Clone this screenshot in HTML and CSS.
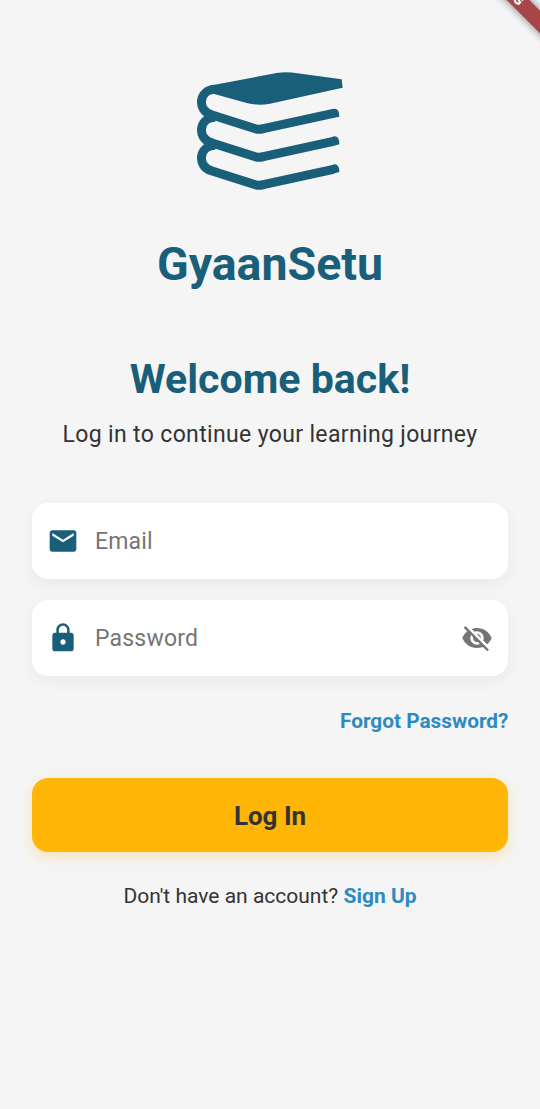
FILE: index.html
```html
<!DOCTYPE html>
<html lang="en">
<head>
<meta charset="utf-8">
<title>GyaanSetu</title>
<link rel="stylesheet" href="styles.css">
</head>
<body>
<main class="screen">
  <svg class="logo" width="180" height="140" viewBox="0 0 540 420" aria-hidden="true">
    <path class="logo-fill" d="M100 75 L290 39 Q320 34 352 40 L485 58 L488 83 L270 131 Q235 138 200 129 L100 101 Z"/>
    <g class="logo-line">
      <path d="M106 88 C56 88 50 152 94 164 L226 206 Q237 210 250 206 L460 160"/>
      <path d="M106 172 C56 172 50 236 94 248 L226 290 Q237 294 250 290 L460 244"/>
      <path d="M106 256 C56 256 50 320 94 332 L226 374 Q237 378 250 374 L460 328"/>
    </g>
    <g class="logo-fill">
      <path d="M456 147 L463 146 Q478 145 478 170 L456 175 Z"/>
      <path d="M456 231 L463 229 Q478 228 478 253 L456 259 Z"/>
      <path d="M456 315 L463 313 Q478 312 478 336 L456 342 Z"/>
    </g>
  </svg>
  <h1 class="brand">GyaanSetu</h1>
  <h2 class="welcome">Welcome back!</h2>
  <p class="subtitle">Log in to continue your learning journey</p>
  <form class="form">
    <div class="field">
      <svg class="icon" viewBox="0 0 24 24"><path d="M20 4H4c-1.1 0-1.99.9-1.99 2L2 18c0 1.1.9 2 2 2h16c1.1 0 2-.9 2-2V6c0-1.1-.9-2-2-2zm0 4l-8 5-8-5V6l8 5 8-5v2z"/></svg>
      <span class="label">Email</span>
    </div>
    <div class="field">
      <svg class="icon" viewBox="0 0 24 24"><path d="M18 8h-1V6c0-2.76-2.24-5-5-5S7 3.240 7 6v2H6c-1.1 0-2 .9-2 2v10c0 1.1.9 2 2 2h12c1.1 0 2-.9 2-2V10c0-1.1-.9-2-2-2zm-6 9c-1.1 0-2-.9-2-2s.9-2 2-2 2 .9 2 2-.9 2-2 2zm3.100-9H8.900V6c0-1.710 1.390-3.100 3.100-3.100s3.100 1.390 3.100 3.100v2z"/></svg>
      <span class="label">Password</span>
      <svg class="icon icon-muted" viewBox="0 0 24 24"><path d="M12 7c2.760 0 5 2.240 5 5 0 .65-.13 1.260-.36 1.830l2.920 2.920c1.510-1.260 2.700-2.890 3.430-4.750-1.730-4.390-6-7.500-11-7.500-1.400 0-2.740.25-3.980.7l2.160 2.160C10.740 7.130 11.350 7 12 7zM2 4.270l2.280 2.280.46.46C3.080 8.300 1.780 10.020 1 12c1.730 4.390 6 7.500 11 7.500 1.550 0 3.030-.3 4.380-.84l.42.42L19.730 22 21 20.730 3.270 3 2 4.270zM7.530 9.800l1.550 1.550c-.05.21-.08.43-.08.65 0 1.660 1.340 3 3 3 .22 0 .44-.03.65-.08l1.550 1.550c-.67.33-1.410.53-2.200.53-2.760 0-5-2.240-5-5 0-.79.2-1.530.53-2.200zm4.310-.78l3.150 3.150.02-.16c0-1.660-1.340-3-3-3l-.17.01z"/></svg>
    </div>
    <a class="forgot">Forgot Password?</a>
    <button class="submit" type="button">Log In</button>
  </form>
  <p class="signup">Don't have an account? <a class="signup-link">Sign Up</a></p>
  <div class="ribbon"><span class="ribbon-text">DEBUG</span></div>
</main>
</body>
</html>
```
FILE: styles.css
```css
* { box-sizing: border-box; }
body { margin: 0; background: #f5f5f5; font-family: Roboto, sans-serif; color: #333; }
.screen { position: relative; display: flex; flex-direction: column; align-items: center; height: 1109px; padding: 60px 31.6px 0; overflow: hidden; }
.logo { flex: none; }
.logo-fill { fill: #1a5f7a; }
.logo-line { fill: none; stroke: #1a5f7a; stroke-width: 27; stroke-linejoin: round; }
h1, h2, p { margin: 0; white-space: nowrap; }
.brand { margin-top: 36px; font-size: 46.5px; line-height: 56px; font-weight: 700; color: #1a5f7a; }
.welcome { margin-top: 62px; font-size: 41.1px; line-height: 50px; font-weight: 700; color: #1a5f7a; }
.subtitle { margin-top: 17px; font-size: 23px; line-height: 28px; letter-spacing: .35px; }
.form { display: flex; flex-direction: column; align-self: stretch; margin-top: 54px; }
.field { display: flex; align-items: center; height: 76px; margin-bottom: 21px; padding: 0 15.3px; border-radius: 16px; background: #fff; box-shadow: 0 5px 16px rgba(0,0,0,.05); }
.icon { width: 32px; height: 32px; fill: #1a5f7a; flex: none; }
.icon-muted { fill: #757575; }
.label { flex: 1; margin-left: 16px; padding-top: 1px; font-size: 23px; line-height: 28px; letter-spacing: .22px; color: #757575; }
.forgot { align-self: flex-end; margin-top: 11px; font-size: 20.8px; line-height: 26px; font-weight: 700; color: #2e8bc0; }
.submit { height: 74px; margin-top: 44px; padding: 1px 0 0; border: 0; border-radius: 16px; background: #ffb606; color: #333; font: 700 26px/32px Roboto, sans-serif; box-shadow: 0 5px 13px rgba(255,182,6,.25); }
.signup { margin-top: 31px; font-size: 21px; line-height: 26px; }
.signup-link { font-weight: 700; color: #2e8bc0; }
.ribbon { position: absolute; top: -18px; left: 438px; width: 140px; height: 16px; transform: rotate(45deg); background: #a94448; box-shadow: 0 0 8px rgba(0,0,0,.5); color: #fff; text-align: center; }
.ribbon-text { display: block; margin-right: 5px; font-size: 13.4px; line-height: 16px; font-weight: 900; }
```
